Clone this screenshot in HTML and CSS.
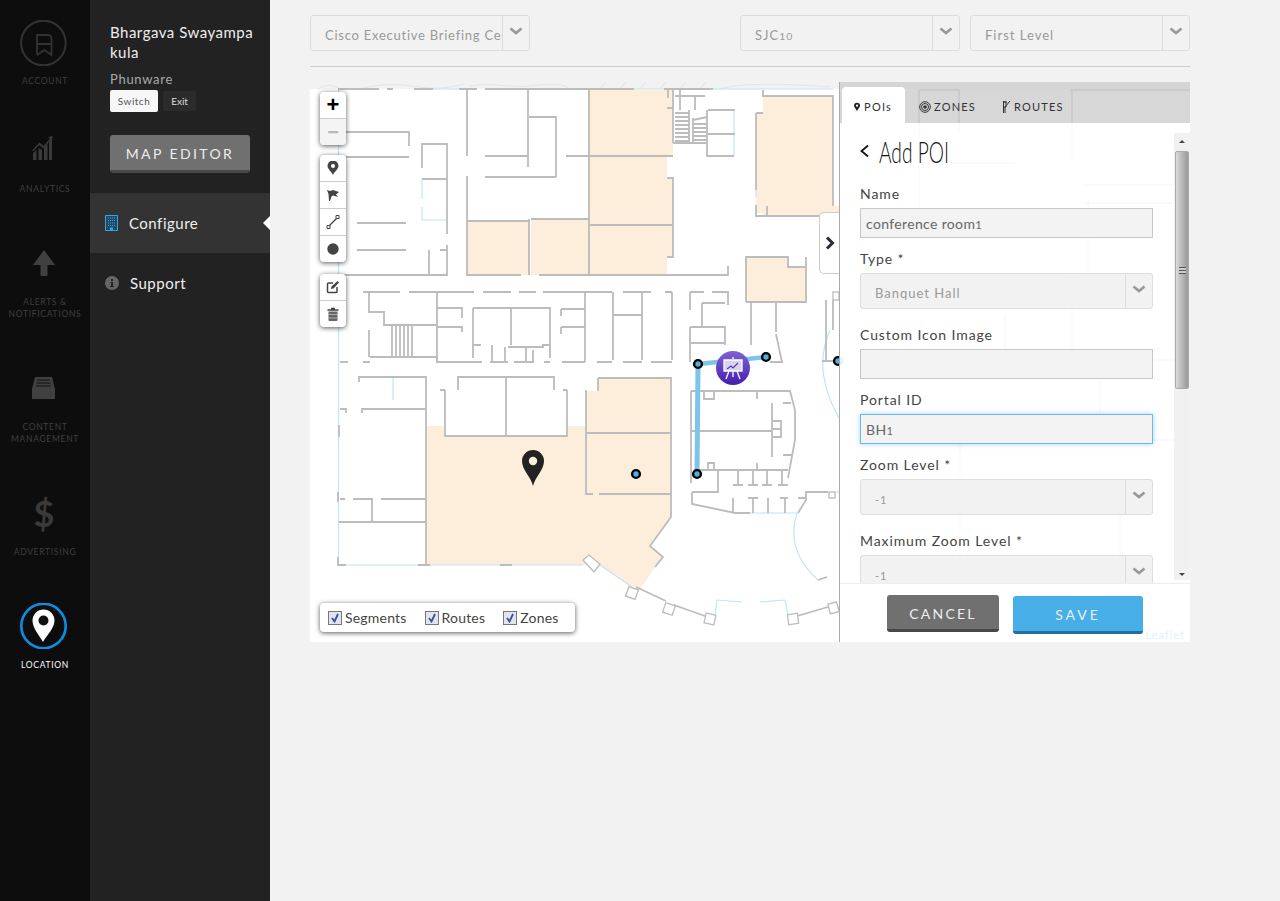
FILE: index.html
```html
<!DOCTYPE html>
<html lang="en">
<head>
    <meta charset="UTF-8">
    <title>Location - Configure</title>
    <link rel="stylesheet" href="styles.css">
</head>
<body>

    <!-- Main app nav -->
    <nav class="app-nav">
        <a class="app-item app-account">
            <svg class="app-icon" width="48" height="46" viewBox="0 0 48 46"><circle cx="23.400" cy="23" r="22.300" fill="none" stroke="#333" stroke-width="2"/><path d="M17 35V15h11a3.500 3.500 0 0 1 3.500 3.500V35l-7-5-7.500 5M17 24h14.500" fill="none" stroke="#333" stroke-width="1.800"/></svg>
            <span>ACCOUNT</span>
        </a>
        <a class="app-item">
            <svg class="app-icon" width="48" height="46" viewBox="0 0 48 46"><path d="M13 26l3.500-3v10H13zM18.500 21l3.500 2v10h-3.500zM24 21l3.500-4v16H24zM29 15l3-3v21h-3z" fill="#3a3a3a"/><path d="M12 23.500l7.500-8 4 3.500 6.500-7.500-2-1.500L32.500 9 32 14.500l-1.500-1.500-7 8.500-4-3.500-6 6z" fill="#3a3a3a"/></svg>
            <span>ANALYTICS</span>
        </a>
        <a class="app-item">
            <svg class="app-icon" width="48" height="46" viewBox="0 0 48 46"><path d="M24 10l11 15h-7.500v10a1 1 0 0 1-1 1h-5a1 1 0 0 1-1-1V25H13z" fill="#404040"/></svg>
            <span>ALERTS &amp;<br>NOTIFICATIONS</span>
        </a>
        <a class="app-item">
            <svg class="app-icon" width="48" height="46" viewBox="0 0 48 46"><path d="M15 12h17l3 12v10H12V24z" fill="#404040"/><path d="M17 15h13M16.500 18h14M16 21h15" stroke="#111" stroke-width="1"/></svg>
            <span>CONTENT<br>MANAGEMENT</span>
        </a>
        <a class="app-item">
            <div class="app-icon dollar">$</div>
            <span>ADVERTISING</span>
        </a>
        <a class="app-item active">
            <svg class="app-icon" width="48" height="46" viewBox="0 0 48 46"><circle cx="23.500" cy="23" r="22.200" fill="none" stroke="#0a8fe6" stroke-width="2.600"/><path d="M23 39C19 32 12.500 25 12.500 17.500a10.800 10.800 0 0 1 22 0C34.500 25 27 32 23 39z" fill="#fff"/><circle cx="23.500" cy="17.500" r="5" fill="#111"/></svg>
            <span>LOCATION</span>
        </a>
    </nav>

    <!-- Second column -->
    <aside class="side">
        <div class="user">
            <div class="user-name">Bhargava Swayampa<br>kula</div>
            <div class="user-org">Phunware</div>
            <div class="user-actions">
                <button class="btn-switch">Switch</button>
                <button class="btn-exit">Exit</button>
            </div>
            <button class="btn-editor">MAP EDITOR</button>
        </div>
        <a class="side-link current">
            <svg width="13" height="16" viewBox="0 0 13 16"><path d="M.5.500h12v15H.5z" fill="#1d4a68" stroke="#3ba3e0"/><path d="M3 3h7M3 5.500h7M3 8h7M3 10.500h7" stroke="#3ba3e0" stroke-dasharray="1 1"/><path d="M5 12.500h3V15H5z" fill="#3ba3e0"/></svg>
            Configure
        </a>
        <a class="side-link">
            <svg width="14" height="14" viewBox="0 0 14 14"><circle cx="7" cy="7" r="7" fill="#666"/><path d="M6 3h2v2H6zM5.500 6h2.500v4h1v1H5v-1h1V7h-.5z" fill="#222"/></svg>
            Support
        </a>
    </aside>

    <main class="content">
        <div class="pickers">
            <div class="select pick-wide"><span class="select-text tight">Cisco Executive Briefing Center</span><span class="select-arrow"><svg width="14" height="8" viewBox="0 0 14 8"><path d="M1.500 1.500L7 6l5.500-4.500" fill="none" stroke="#999" stroke-width="2.600"/></svg></span></div>
            <div class="pickers-right">
                <div class="select pick-wide"><span class="select-text">SJC<span class="num">10</span></span><span class="select-arrow"><svg width="14" height="8" viewBox="0 0 14 8"><path d="M1.500 1.500L7 6l5.500-4.500" fill="none" stroke="#999" stroke-width="2.600"/></svg></span></div>
                <div class="select pick-wide"><span class="select-text">First Level</span><span class="select-arrow"><svg width="14" height="8" viewBox="0 0 14 8"><path d="M1.500 1.500L7 6l5.500-4.500" fill="none" stroke="#999" stroke-width="2.600"/></svg></span></div>
            </div>
        </div>
        <hr class="rule">

        <div class="map">
            <!-- Floor plan, drawn in page coordinates -->
            <svg class="plan" width="880" height="560" viewBox="310 82 880 560">
                <rect x="310" y="82" width="880" height="7" fill="#f2f2f2"/>
                <path class="contour" d="M318 89c8-5 14-5 22 0M360 89c20-6 40-5 60-2s30 0 44-3M470 86c20-4 40 2 60 0s30-4 40 3M600 89l6-7M620 89l6-7M640 89l6-7M660 89l6-7M680 89l6-7M700 89l6-7M720 89c20-6 60-6 110-2"/>

                <g class="rooms">
                    <path d="M589 90h84v66h-6v22h6v79h-6v18h-78z"/>
                    <path d="M763 96h70v110h6v10h-76v-3h-7V113h7z"/>
                    <path d="M467 221h62v54h-62zM531 219h58v56h-58z"/>
                    <path d="M746 257h42v10h18v35h-60z"/>
                    <path d="M427 426H445V436H567V426H586V391H598V378H671V517L650 546 663 557 655 567 640 590 630 585 600 565H427z"/>
                </g>

                <g class="blue">
                    <path d="M338.500 89v476h244"/>
                    <path d="M433 89h26M634 89h30M713 89h120M422 179v20M422 207v13h25M734 110v46M756 190v7M393 378v22"/>
                    <path d="M830 330q-18 40 9 88M797 513q-12 37 21 67M600 565l32 22M717 600l25 2M760 602l25-2M717 600l-2 15M785 600l3 15M750 513h48M833 492h6"/>
                </g>

                <g class="walls">
                    <path d="M338 89h41M387 89h6M414 89h19M459 89h18M485 89h149M664 89h49"/>
                    <path d="M346 132h63v14M346 157h63M422 168v-24h25v90M422 179h25M357 223h49M357 250h49"/>
                    <path d="M447 245v30H343M429 275v-25M440 250h7"/>
                    <path d="M467 90v66M467 176v99h54M528 90v77M529 117h27v60M485 156h43M485 177h71M539 275h134M566 156h23"/>
                    <path d="M467 221h62M529 219v56M531 219h58M589 90v185M589 156h84M589 225h84"/>
                    <path d="M668 90v8M667 108h6M673 90v53M675 96h30M667 178h6v79h-6M667 275h61v-9M673 143h34M707 110v46h27M708 110h27M708 134h27M680 90v20M695 96v14"/>
                    <path d="M675 113h14M675 117h14M675 121h14M675 125h14M675 129h14M675 133h14M675 137h14M675 141h14M693 124h14M693 128h14M693 132h14M693 136h14M693 140h14M689 110v33M693 118v25M693 120l14-3"/>
                    <path d="M756 113v77M756 205v11h83M756 113h7M763 90v6h70v110M767 206v10"/>
                    <path d="M746 302v-45h42v10h18M806 257v45h-60"/>
                    <path d="M363 292h37M409 292h65M483 292h28M519 292h17M543 292h69M623 292h28M665 292h7M690 292h14M712 292h16v13M690 292v18M702 303h23M702 303v24M690 327h35v6M613 292v68M642 292v68M672 292v68M613 315h29M690 327v35M691 343h34M725 330v15M751 302v43M776 302v30M776 334l6 28h-12"/>
                    <path d="M369 292v20h15v13h53M437 292v70h45M437 308h25v10M437 327h25v5M473 308v50M473 308h77v50M511 308v37M561 309h24M561 327h24M585 292v70M561 309v7M561 327v7M481 345h-8M550 345h-8"/>
                    <path d="M392 325v32M396 325v32M400 325v32M404 325v32M408 325v32M412 325v32M392 357h20M370 357h67v5M369 330v27M340 362h8M363 362h7M490 362h18M508 347h36M533 350v12M514 362h20M544 362h6M492 345v17M505 347v15M526 347v15M562 362h23M597 362h15M623 362h19M651 362h21"/>
                    <path d="M359 382v-5h67v188M362 413v-4h64M340 409h6v4M340 499h5M353 499h20M381 499h45M372 499v23M339 522h87M339 425v12M338 492v10M338 557v8h8M418 565h12M500 565h12"/>
                    <path d="M445 390v46h122v-46M440 390h5M458 390v-13h96v13M506 377v59M563 390h4"/>
                    <path d="M586 390v104h7M586 433h85M599 494h72M598 378v13M598 378h73v139l-21 29 13 11-8 10"/>
                    <path d="M691 391v92M691 391h99l5 19v30l-7 38M691 431h81M772 403v54M698 470h90M704 392v7h10v-7M708 470v-7h6v7M757 391v8M757 463v7M773 421h8v8h-8M773 437h8v-8M783 403h8M783 455h9"/>
                    <path d="M692 492h26v-22M692 492v12l43 9h15M738 470v15M733 485h10M753 470v15M748 485h10M767 470v15M762 485h10M782 470v15M778 485h10M733 498v15M748 498h10M753 498v15M768 498v15M780 498h8M785 498v15M798 498h8M798 513l8-13v-8h22"/>
                    <path d="M818 580l9-3M636 587l30 14M674 605l31 11M797 616l31-9M836 361h-14M826 300v62M833 300v30"/>
                </g>
                <g class="pillars">
                    <path d="M583 560l6-5 11 9-6 8z"/>
                    <rect x="627" y="588" width="10" height="10" transform="rotate(20 632 593)"/>
                    <rect x="664" y="604" width="10" height="10" transform="rotate(18 669 609)"/>
                    <rect x="705" y="614" width="10" height="10" transform="rotate(12 710 619)"/>
                    <rect x="788" y="614" width="10" height="10" transform="rotate(-8 793 619)"/>
                    <rect x="829" y="603" width="9" height="10" transform="rotate(-15 833 608)"/>
                    <rect x="829" y="492" width="6" height="6"/>
                    <rect x="833" y="292" width="6" height="8"/>
                </g>

                <!-- Faint plan behind the panel -->
                <path class="walls" d="M919 90h40v42M919 90v140M1070 90h120M1072 90v70M950 163h65M1083 185h100M1083 203h100M1072 270v100h-30M1088 200v70M1100 360h80M1100 440h80M1100 380v60M920 360h80M1005 315v50M960 435v140M1120 500v80M1180 400v180"/>

                <!-- Route segments -->
                <path class="route" d="M698 364L697 474" stroke-width="5"/>
                <path class="route" d="M698 364L766 357" stroke-width="4.500"/>
                <g class="node">
                    <circle cx="698" cy="364" r="3.900"/>
                    <circle cx="697" cy="474" r="3.900"/>
                    <circle cx="766" cy="357" r="3.900"/>
                    <circle cx="636" cy="474" r="3.900"/>
                    <circle cx="838" cy="361" r="3.900"/>
                </g>

                <defs>
                    <linearGradient id="poi" x1="0" y1="0" x2="0" y2="1"><stop offset="0" stop-color="#7d62d6"/><stop offset="1" stop-color="#4420ad"/></linearGradient>
                </defs>
                <circle cx="733" cy="368" r="17" fill="url(#poi)"/>
                <path d="M733 357v2M724 360h18v11h-18z" fill="#d9d3f2" stroke="#fff" stroke-width="1.300"/>
                <path d="M727 369l4-3 2 2 5-5" fill="none" stroke="#5a38bd" stroke-width="1.200"/>
                <path d="M729 371l-3 8M737 371l3 8M733 371v6" fill="none" stroke="#fff" stroke-width="1.300"/>

                <path d="M533 486c-2-9-11-16-11-25a11 11 0 0 1 22 0c0 9-9 16-11 25z" fill="#222"/>
                <circle cx="533" cy="461" r="4.200" fill="#fdeedb"/>
            </svg>

            <!-- Leaflet controls -->
            <div class="tools">
                <div class="tool-bar">
                    <a class="tool tool-plus">+</a>
                    <a class="tool tool-minus">−</a>
                </div>
                <div class="tool-bar">
                    <a class="tool"><svg width="12" height="14" viewBox="0 0 12 14"><path d="M6 14C4 10 .5 8 .5 5a5.500 5.500 0 0 1 11 0C11.500 8 8 10 6 14z" fill="#444"/><circle cx="6" cy="5" r="2" fill="#fff"/></svg></a>
                    <a class="tool"><svg width="14" height="14" viewBox="0 0 14 14"><path d="M1 2l3 1 3-1 6 2-3 2.500 2 2.500-5-1.500-1.500 1L4 13H3L2.500 6z" fill="#444"/></svg></a>
                    <a class="tool"><svg width="14" height="14" viewBox="0 0 14 14"><path d="M3 11l8-8" stroke="#444" stroke-width="1.200"/><path d="M1 10.500h3v3H1zM10 .500h3v3h-3z" fill="#fff" stroke="#444"/></svg></a>
                    <a class="tool"><svg width="14" height="14" viewBox="0 0 14 14"><circle cx="7" cy="7" r="5.700" fill="#444"/></svg></a>
                </div>
                <div class="tool-bar">
                    <a class="tool"><svg width="14" height="14" viewBox="0 0 14 14"><path d="M7 3H2.500a1 1 0 0 0-1 1v7.500a1 1 0 0 0 1 1H10a1 1 0 0 0 1-1V7" fill="none" stroke="#444" stroke-width="1.500"/><path d="M5 9l.5-2.500L11.500 1 13 2.500 7.500 8.500z" fill="#444"/></svg></a>
                    <a class="tool"><svg width="12" height="14" viewBox="0 0 12 14"><path d="M4 1.500h4M.5 3h11" stroke="#444" stroke-width="1.400"/><path d="M1.500 4.500h9V13a1 1 0 0 1-1 1h-7a1 1 0 0 1-1-1z" fill="#666"/><path d="M1.500 7.500h9M1.500 11h9" stroke="#ddd" stroke-width=".6"/></svg></a>
                </div>
            </div>

            <div class="legend">
                <label class="legend-item"><span class="check"><svg width="10" height="10" viewBox="0 0 10 10"><path d="M2 5l2.500 3.500L8 1" fill="none" stroke="#3c4f96" stroke-width="1.800"/></svg></span>Segments</label>
                <label class="legend-item"><span class="check"><svg width="10" height="10" viewBox="0 0 10 10"><path d="M2 5l2.500 3.500L8 1" fill="none" stroke="#3c4f96" stroke-width="1.800"/></svg></span>Routes</label>
                <label class="legend-item"><span class="check"><svg width="10" height="10" viewBox="0 0 10 10"><path d="M2 5l2.500 3.500L8 1" fill="none" stroke="#3c4f96" stroke-width="1.800"/></svg></span>Zones</label>
            </div>

            <a class="panel-toggle"><svg width="10" height="14" viewBox="0 0 10 14"><path d="M2 1.500L7.500 7 2 12.500" fill="none" stroke="#2b2b3a" stroke-width="3"/></svg></a>

            <!-- Editor panel -->
            <section class="panel">
                <div class="tabs">
                    <a class="tab active"><svg width="9" height="12" viewBox="0 0 8 11"><path d="M4 11C3 8 0 6 0 3.800a4 4 0 0 1 8 0C8 6 5 8 4 11z" fill="#222"/><circle cx="4" cy="3.800" r="1.500" fill="#fff"/></svg>POIs</a>
                    <a class="tab"><svg width="12" height="12" viewBox="0 0 12 12"><circle cx="6" cy="6" r="5.300" fill="none" stroke="#333"/><circle cx="6" cy="6" r="3.500" fill="none" stroke="#333"/><circle cx="6" cy="6" r="1.800" fill="#333"/></svg>ZONES</a>
                    <a class="tab"><svg width="9" height="12" viewBox="0 0 9 12"><path d="M1.500 0v12M3 12V6l5-6M1.500 1H5M1 1h3v5H1" fill="none" stroke="#333"/></svg>ROUTES</a>
                </div>
                <div class="panel-body">
                    <form class="form">
                        <div class="form-title">
                            <svg width="9" height="12" viewBox="0 0 9 12"><path d="M8 .500L1.500 6 8 11.500" fill="none" stroke="#111" stroke-width="1.800"/></svg>
                            <h2>Add POI</h2>
                        </div>
                        <label class="field-label">Name</label>
                        <div class="input">conference room<span class="num">1</span></div>
                        <label class="field-label">Type *</label>
                        <div class="select form-select"><span class="select-text">Banquet Hall</span><span class="select-arrow"><svg width="14" height="8" viewBox="0 0 14 8"><path d="M1.500 1.500L7 6l5.500-4.500" fill="none" stroke="#999" stroke-width="2.600"/></svg></span></div>
                        <label class="field-label">Custom Icon Image</label>
                        <div class="input"></div>
                        <label class="field-label">Portal ID</label>
                        <div class="input focused">BH<span class="num">1</span></div>
                        <label class="field-label">Zoom Level *</label>
                        <div class="select form-select"><span class="select-text small">-1</span><span class="select-arrow"><svg width="14" height="8" viewBox="0 0 14 8"><path d="M1.500 1.500L7 6l5.500-4.500" fill="none" stroke="#999" stroke-width="2.600"/></svg></span></div>
                        <label class="field-label">Maximum Zoom Level *</label>
                        <div class="select form-select"><span class="select-text small">-1</span><span class="select-arrow"><svg width="14" height="8" viewBox="0 0 14 8"><path d="M1.500 1.500L7 6l5.500-4.500" fill="none" stroke="#999" stroke-width="2.600"/></svg></span></div>
                    </form>
                    <div class="scrollbar">
                        <div class="scroll-arrow up"></div>
                        <div class="scroll-thumb"><i></i></div>
                        <div class="scroll-track"></div>
                        <div class="scroll-arrow down"></div>
                    </div>
                </div>
                <div class="panel-foot">
                    <button class="btn-cancel">CANCEL</button>
                    <button class="btn-save">SAVE</button>
                    <span class="attribution">Leaflet</span>
                </div>
            </section>
        </div>
    </main>

</body>
</html>
```

FILE: styles.css
```css
* {
    box-sizing: border-box;
}

body {
    display: flex;
    margin: 0;
    height: 901px;
    overflow: hidden;
    font-family: Lato, Arial, sans-serif;
    background-color: #f2f2f2;
    color: #444;
}

button {
    font-family: inherit;
    cursor: pointer;
    border: none;
}

.num {
    font-size: 0.8em;
}

/* App nav */
.app-nav {
    display: flex;
    flex-direction: column;
    gap: 45px;
    width: 90px;
    flex-shrink: 0;
    padding-top: 20px;
    background-color: #0d0d0d;
}

.app-item {
    display: flex;
    flex-direction: column;
    align-items: center;
    color: #3f3f3f;
    font-size: 8.500px;
    line-height: 12px;
    letter-spacing: 0.7px;
    text-align: center;
}

.app-account {
    margin-bottom: -5px;
}

.app-icon {
    display: block;
    height: 46px;
    margin: 0 2px 10px 0;
}

.app-account .app-icon {
    margin-bottom: 9px;
}

.dollar {
    width: 46px;
    font-size: 36px;
    line-height: 46px;
    font-weight: 700;
    color: #3a3a3a;
    letter-spacing: 0;
}

.app-item.active {
    color: #fff;
}

/* Second column */
.side {
    width: 180px;
    flex-shrink: 0;
    background-color: #222;
    color: #eee;
}

.user {
    height: 193px;
    padding: 22px 0 0 20px;
}

.user-name {
    font-size: 15px;
    line-height: 20px;
    letter-spacing: 0.5px;
    white-space: nowrap;
}

.user-org {
    margin-top: 8px;
    font-size: 13px;
    line-height: 18px;
    letter-spacing: 0.7px;
    color: #aaa;
}

.user-actions {
    display: flex;
    align-items: center;
    gap: 5px;
    margin-top: 2px;
}

.btn-switch {
    width: 48px;
    height: 22px;
    padding: 0;
    font-size: 10px;
    letter-spacing: 0.5px;
    color: #555;
    background-color: #f7f7f7;
    border-radius: 2px;
}

.btn-exit {
    width: 33px;
    height: 20px;
    padding: 0;
    font-size: 10px;
    color: #ddd;
    background-color: #2b2b2b;
    border-radius: 2px;
}

.btn-editor {
    display: block;
    width: 140px;
    height: 38px;
    margin-top: 23px;
    padding: 2px 0 0;
    font-size: 14px;
    letter-spacing: 2.400px;
    color: #eee;
    background-color: #707070;
    border-bottom: 3px solid #484848;
    border-radius: 3px;
}

.side-link {
    display: flex;
    align-items: center;
    gap: 11px;
    height: 60px;
    padding-left: 15px;
    font-size: 15px;
    letter-spacing: 0.5px;
    position: relative;
}

.side-link.current {
    background-color: #333;
}

.side-link.current::after {
    content: "";
    position: absolute;
    right: 0;
    top: 23px;
    border: 7px solid transparent;
    border-right-color: #fff;
    border-left-width: 0;
}

/* Main area */
.content {
    width: 1010px;
    padding: 15px 90px 0 40px;
}

.pickers {
    display: flex;
    justify-content: space-between;
}

.pickers-right {
    display: flex;
    gap: 10px;
}

.select {
    display: flex;
    background-color: #f2f2f2;
    border: 1px solid #ddd;
    border-radius: 3px;
    color: #999;
    font-size: 13px;
    letter-spacing: 1px;
}

.pick-wide {
    width: 220px;
    height: 36px;
}

.select-text {
    flex: 1;
    min-width: 0;
    padding: 4px 0 0 14px;
    line-height: 30px;
    white-space: nowrap;
    overflow: hidden;
}

.select-text.tight {
    letter-spacing: 0.75px;
}

.select-text.small {
    font-size: 11px;
    padding-top: 5px;
}

.select-arrow {
    display: flex;
    justify-content: center;
    padding-top: 11px;
    width: 27px;
    flex-shrink: 0;
    border-left: 1px solid #ddd;
}

.rule {
    margin: 15px 0 15px;
    border: none;
    border-top: 1px solid #ccc;
}

/* Map */
.map {
    position: relative;
    height: 560px;
    background-color: #fff;
    overflow: hidden;
}

.plan {
    position: absolute;
    left: 0;
    top: 0;
}

.plan .contour {
    fill: none;
    stroke: #e4e4e4;
}

.plan .rooms {
    fill: #fdeedb;
}

.plan .walls {
    fill: none;
    stroke: #bcbcbc;
    stroke-width: 1.800;
}

.plan .blue {
    fill: none;
    stroke: #bfe6f5;
    stroke-width: 1.200;
}

.plan .pillars {
    fill: #fff;
    stroke: #bcbcbc;
    stroke-width: 1.300;
}

.plan .route {
    stroke: #7cc5ea;
    fill: none;
}

.plan .node {
    fill: #4cb0e6;
    stroke: #000;
    stroke-width: 2.400;
}

.tools {
    position: absolute;
    left: 10px;
    top: 10px;
    display: flex;
    flex-direction: column;
}

.tool-bar {
    width: 26px;
    margin-bottom: 10px;
    border-radius: 4px;
    background-color: #fff;
    box-shadow: 0 1px 5px rgba(0, 0, 0, 0.65);
    overflow: hidden;
}

.tool-bar:nth-child(2) {
    margin-bottom: 12px;
}

.tool {
    display: flex;
    align-items: center;
    justify-content: center;
    height: 27px;
    border-bottom: 1px solid #ccc;
    color: #000;
}

.tool:last-child {
    height: 26px;
    border-bottom: none;
}

.tool-plus {
    font: bold 22px "Liberation Sans", sans-serif;
}

.tool-minus {
    font: bold 20px "Liberation Sans", sans-serif;
    color: #bbb;
    background-color: #f4f4f4;
}

.legend {
    position: absolute;
    left: 10px;
    top: 521px;
    display: flex;
    align-items: center;
    gap: 18px;
    width: 255px;
    height: 29px;
    padding-left: 8px;
    border-radius: 4px;
    background-color: #fff;
    box-shadow: 0 1px 5px rgba(0, 0, 0, 0.65);
    font-size: 14px;
    letter-spacing: 0.2px;
    color: #444;
}

.legend-item {
    display: flex;
    align-items: center;
    gap: 3px;
}

.check {
    display: flex;
    align-items: center;
    justify-content: center;
    width: 14px;
    height: 14px;
    background-color: #dfe4ee;
    border: 1px solid #777;
}

.panel-toggle {
    position: absolute;
    left: 509px;
    top: 130px;
    display: flex;
    align-items: center;
    justify-content: center;
    width: 21px;
    height: 62px;
    background-color: #fff;
    border: 1px solid #ccc;
    border-right: none;
    border-radius: 5px 0 0 5px;
}

/* Editor panel */
.panel {
    position: absolute;
    right: 0;
    top: 0;
    display: flex;
    flex-direction: column;
    width: 351px;
    height: 560px;
    border-left: 1px solid #aaa;
}

.tabs {
    display: flex;
    align-items: flex-end;
    height: 41px;
    padding-left: 2px;
    background-color: rgba(205, 205, 205, 0.8);
}

.tab {
    display: flex;
    align-items: center;
    gap: 3px;
    height: 36px;
    padding: 3px 13px 0;
    font-size: 11px;
    letter-spacing: 1.200px;
    color: #333;
}

.tab.active {
    gap: 4px;
    width: 63px;
    padding-left: 12px;
    background-color: #fff;
    border-radius: 4px 4px 0 0;
}

.tab + .tab {
    padding: 3px 12px 0 14px;
}

.panel-body {
    display: flex;
    height: 460px;
    background-color: rgba(255, 255, 255, 0.93);
    overflow: hidden;
}

.form {
    width: 334px;
    padding: 13px 21px 0 20px;
    flex-shrink: 0;
}

.form-title {
    display: flex;
    align-items: center;
    height: 34px;
    margin-bottom: 14px;
}

.form-title svg {
    margin-top: -4px;
}

.form-title h2 {
    margin: -4px 0 0 10px;
    font-size: 30px;
    font-weight: 300;
    line-height: 34px;
    color: #111;
    white-space: nowrap;
    transform: scaleX(0.64);
    transform-origin: left center;
}

.field-label {
    display: block;
    font-size: 14px;
    line-height: 20px;
    letter-spacing: 0.9px;
    color: #444;
    margin-bottom: 4px;
}

.input {
    height: 30px;
    margin-bottom: 11px;
    padding-left: 5px;
    background-color: #f3f3f3;
    border: 1px solid #c8c8c8;
    font-size: 14px;
    line-height: 29px;
    letter-spacing: 0.35px;
    color: #666;
}

.input.focused {
    border-color: #6db9ee;
    box-shadow: 0 0 5px rgba(100, 180, 240, 0.6);
}

.form-select {
    height: 36px;
    margin-bottom: 16px;
}

.scrollbar {
    display: flex;
    flex-direction: column;
    width: 16px;
    height: 447px;
    margin-top: 10px;
    background-color: #f1f1f1;
}

.scroll-arrow {
    height: 18px;
    flex-shrink: 0;
    position: relative;
}

.scroll-arrow::after {
    content: "";
    position: absolute;
    left: 5px;
    border: 3px solid transparent;
}

.scroll-arrow.up::after {
    top: 4px;
    border-bottom-color: #444;
}

.scroll-arrow.down::after {
    bottom: 1px;
    border-top-color: #444;
}

.scroll-thumb {
    display: flex;
    align-items: center;
    justify-content: center;
    height: 238px;
    flex-shrink: 0;
    margin: 0 1px;
    background: linear-gradient(to right, #ddd, #c4c4c4 30%, #999);
    border: 1px solid #aaa;
    border-radius: 2px;
}

.scroll-thumb i {
    width: 7px;
    height: 7px;
    border-top: 1px solid #555;
    border-bottom: 1px solid #555;
    background: linear-gradient(#ccc 33%, #555 33%, #555 66%, #ccc 66%);
}

.scroll-track {
    flex: 1;
}

.panel-foot {
    position: relative;
    display: flex;
    align-items: flex-start;
    gap: 14px;
    height: 59px;
    padding: 11px 0 0 47px;
    background-color: #fff;
    border-top: 1px solid #eee;
}

.btn-cancel,
.btn-save {
    padding: 2px 0 0;
    font-size: 14px;
    color: #eee;
    border-radius: 3px;
}

.btn-cancel {
    width: 112px;
    height: 37px;
    letter-spacing: 2.200px;
    background-color: #707070;
    border-bottom: 3px solid #474747;
}

.btn-save {
    width: 130px;
    height: 38px;
    margin-top: 1px;
    letter-spacing: 3px;
    background-color: #47aee8;
    border-bottom: 3px solid #1f6f9f;
}

.attribution {
    position: absolute;
    right: 5px;
    bottom: 1px;
    font-size: 11px;
    letter-spacing: 1px;
    color: #e3f1f8;
}
```
